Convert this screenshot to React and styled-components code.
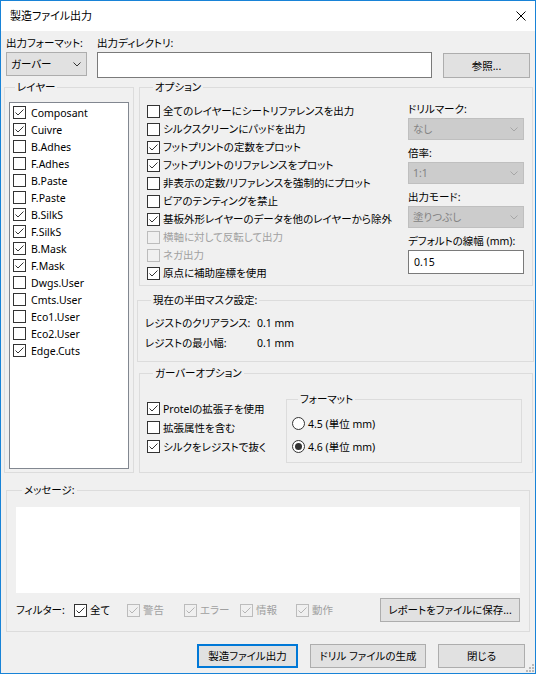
import React from "react";
import styled, { createGlobalStyle } from "styled-components";

const GlobalStyle = createGlobalStyle`
  html, body {
    margin: 0;
    padding: 0;
    background: #f0f0f0;
  }
  body {
    font-family: "Noto Sans", "Noto Sans CJK JP", sans-serif;
    font-size: 10.5px;
    line-height: 14px;
    color: #000;
    font-feature-settings: "palt";
  }
  * {
    box-sizing: border-box;
  }
`;

const Window = styled.div`
  position: relative;
  width: 536px;
  height: 674px;
  border: 1px solid #1883d7;
  background: #f0f0f0;
  display: flex;
  flex-direction: column;
`;

const TitleBar = styled.div`
  height: 30px;
  background: #fff;
  display: flex;
  align-items: center;
  justify-content: space-between;
  padding: 0 9px 0 9px;
  font-size: 11px;
`;

const Body = styled.div`
  flex: 1;
  padding: 5px 1px 0 3px;
  display: flex;
  flex-direction: column;
`;

const TopRow = styled.div`
  display: flex;
  align-items: flex-start;
  margin: 0 4px 0 2px;
`;

const Field = styled.div`
  display: flex;
  flex-direction: column;
  width: ${(p) => p.$w}px;
  margin-left: ${(p) => p.$ml || 0}px;
`;

const Label = styled.div`
  height: 14px;
  width: ${(p) => (p.$w ? `${p.$w}px` : "auto")};
  flex: none;
  margin-bottom: ${(p) => p.$mb || 0}px;
  margin-top: ${(p) => p.$mt || 0}px;
  color: ${(p) => (p.$disabled ? "#a0a0a0" : "#000")};
  white-space: nowrap;
`;

const SelectBox = styled.div`
  height: ${(p) => p.$h}px;
  display: flex;
  align-items: center;
  justify-content: space-between;
  padding: 0 5px 0 4px;
  border: 1px solid ${(p) => (p.$disabled ? "#bfbfbf" : "#adadad")};
  background: ${(p) => (p.$disabled ? "#cccccc" : "#e1e1e1")};
  color: ${(p) => (p.$disabled ? "#838383" : "#000")};
`;

const TextBox = styled.div`
  height: ${(p) => p.$h}px;
  border: 1px solid #7a7a7a;
  background: #fff;
  display: flex;
  align-items: center;
  padding-left: 5px;
`;

const Button = styled.div`
  width: ${(p) => p.$w}px;
  height: ${(p) => p.$h || 24}px;
  margin-top: ${(p) => p.$mt || 0}px;
  margin-left: ${(p) => p.$ml || "0px"};
  border: ${(p) => (p.$default ? "2px solid #0078d7" : "1px solid #adadad")};
  background: #e1e1e1;
  display: flex;
  align-items: center;
  justify-content: center;
  white-space: nowrap;
  flex: none;
`;

const Middle = styled.div`
  display: flex;
  margin-top: 2px;
  height: 393px;
`;

const RightColumn = styled.div`
  flex: 1;
  margin-left: 3px;
  display: flex;
  flex-direction: column;
`;

const Group = styled.fieldset`
  margin: ${(p) => p.$m || 0};
  padding: ${(p) => p.$pad || 0};
  border: 1px solid #dcdcdc;
  min-width: 0;
  width: ${(p) => (p.$w ? `${p.$w}px` : "auto")};
  height: ${(p) => p.$h}px;
  flex: none;
`;

const Legend = styled.legend`
  margin-left: 6px;
  padding: 0 2px;
  line-height: 14px;
  height: 14px;
`;

const LayerList = styled.div`
  height: 367px;
  border: 1px solid #828790;
  background: #fff;
  padding: 1px 0 0 3px;
`;

const Row = styled.label`
  display: flex;
  align-items: center;
  height: ${(p) => p.$h}px;
  gap: ${(p) => p.$gap || 3}px;
  color: ${(p) => (p.$disabled ? "#a0a0a0" : "#000")};
  white-space: nowrap;
  width: ${(p) => (p.$w ? `${p.$w}px` : "auto")};
  flex: none;
`;

const Box = styled.span`
  width: 13px;
  height: 13px;
  flex: none;
  border: 1px solid ${(p) => (p.$disabled ? "#bcbcbc" : "#333")};
  background: ${(p) => (p.$disabled ? "#f0f0f0" : "#fff")};
  display: flex;
  align-items: center;
  justify-content: center;
`;

const Radio = styled.span`
  width: 13px;
  height: 13px;
  flex: none;
  border: 1px solid #333;
  border-radius: 50%;
  background: #fff;
  display: flex;
  align-items: center;
  justify-content: center;
  &::after {
    content: "";
    width: 7px;
    height: 7px;
    border-radius: 50%;
    background: ${(p) => (p.$on ? "#333" : "transparent")};
  }
`;

const OptionsBody = styled.div`
  display: flex;
`;

const OptionChecks = styled.div`
  width: 261px;
  display: flex;
  flex-direction: column;
`;

const OptionSide = styled.div`
  width: 116px;
  display: flex;
  flex-direction: column;
`;

const MaskGrid = styled.div`
  display: grid;
  grid-template-columns: 112px auto;
  grid-auto-rows: 20px;
  align-items: center;
  white-space: nowrap;
`;

const GerberBody = styled.div`
  display: flex;
`;

const GerberChecks = styled.div`
  width: 139px;
  margin-top: 19px;
  display: flex;
  flex-direction: column;
`;

const MessageArea = styled.div`
  height: 86px;
  background: #fff;
`;

const FilterRow = styled.div`
  display: flex;
  align-items: center;
  height: 24px;
  margin-top: 5px;
`;

const BottomRow = styled.div`
  display: flex;
  justify-content: flex-end;
  gap: 12px;
  margin: 12px 9px 0 0;
`;

const Grip = styled.svg`
  position: absolute;
  right: 1px;
  bottom: 1px;
`;

function Chevron({ color }) {
  return (
    <svg width="8" height="5" viewBox="0 0 8 5">
      <path d="M0.5 0.5 L4 4 L7.5 0.5" fill="none" stroke={color} strokeWidth="1" />
    </svg>
  );
}

function Check({ checked, disabled }) {
  return (
    <Box $disabled={disabled}>
      {checked && (
        <svg width="11" height="11" viewBox="0 0 11 11">
          <path
            d="M1.5 5.5 L4 8 L9.5 2.5"
            fill="none"
            stroke={disabled ? "#b5b5b5" : "#333"}
            strokeWidth="1"
          />
        </svg>
      )}
    </Box>
  );
}

function CheckItem({ label, checked, disabled, h, w, gap }) {
  return (
    <Row $h={h} $w={w} $gap={gap} $disabled={disabled}>
      <Check checked={checked} disabled={disabled} />
      {label}
    </Row>
  );
}

const layers = [
  ["Composant", true],
  ["Cuivre", true],
  ["B.Adhes", false],
  ["F.Adhes", false],
  ["B.Paste", false],
  ["F.Paste", false],
  ["B.SilkS", true],
  ["F.SilkS", true],
  ["B.Mask", true],
  ["F.Mask", true],
  ["Dwgs.User", false],
  ["Cmts.User", false],
  ["Eco1.User", false],
  ["Eco2.User", false],
  ["Edge.Cuts", true],
];

const options = [
  ["全てのレイヤーにシートリファレンスを出力", false],
  ["シルクスクリーンにパッドを出力", false],
  ["フットプリントの定数をプロット", true],
  ["フットプリントのリファレンスをプロット", true],
  ["非表示の定数/リファレンスを強制的にプロット", false],
  ["ビアのテンティングを禁止", false],
  ["基板外形レイヤーのデータを他のレイヤーから除外", true],
  ["横軸に対して反転して出力", false, true],
  ["ネガ出力", false, true],
  ["原点に補助座標を使用", true],
];

const filters = [
  ["全て", true, false, 53],
  ["警告", true, true, 57],
  ["エラー", true, true, 56],
  ["情報", true, true, 56],
  ["動作", true, true, 56],
];

export default function App() {
  return (
    <>
      <GlobalStyle />
      <Window>
        <TitleBar>
          <span>製造ファイル出力</span>
          <svg width="10" height="10" viewBox="0 0 10 10">
            <path d="M0.5 0.5 L9.5 9.5 M9.5 0.5 L0.5 9.5" stroke="#000" strokeWidth="1" />
          </svg>
        </TitleBar>
        <Body>
          <TopRow>
            <Field $w={81}>
              <Label $mb={2}>出力フォーマット:</Label>
              <SelectBox $h={24}>
                ガーバー
                <Chevron color="#333" />
              </SelectBox>
            </Field>
            <Field $w={335} $ml={10}>
              <Label $mb={2}>出力ディレクトリ:</Label>
              <TextBox $h={26} />
            </Field>
            <Button $w={87} $h={25} $mt={17} $ml="11px">
              参照...
            </Button>
          </TopRow>

          <Middle>
            <Group $w={130} $h={393} $pad="8px 4px 0 4px">
              <Legend>レイヤー</Legend>
              <LayerList>
                {layers.map(([name, on]) => (
                  <CheckItem key={name} label={name} checked={on} h={17} gap={5} />
                ))}
              </LayerList>
            </Group>

            <RightColumn>
              <Group $h={206} $m="0 1px 0 2px" $pad="8px 7px 0 7px">
                <Legend>オプション</Legend>
                <OptionsBody>
                  <OptionChecks>
                    {options.map(([text, on, dis]) => (
                      <CheckItem key={text} label={text} checked={on} disabled={dis} h={18} />
                    ))}
                  </OptionChecks>
                  <OptionSide>
                    <Label $mb={2}>ドリルマーク:</Label>
                    <SelectBox $h={22} $disabled>
                      なし
                      <Chevron color="#a6a6a6" />
                    </SelectBox>
                    <Label $mt={6} $mb={2}>倍率:</Label>
                    <SelectBox $h={22} $disabled>
                      1:1
                      <Chevron color="#a6a6a6" />
                    </SelectBox>
                    <Label $mt={6} $mb={2}>出力モード:</Label>
                    <SelectBox $h={22} $disabled>
                      塗りつぶし
                      <Chevron color="#a6a6a6" />
                    </SelectBox>
                    <Label $mt={6} $mb={2}>デフォルトの線幅 (mm):</Label>
                    <TextBox $h={24}>0.15</TextBox>
                  </OptionSide>
                </OptionsBody>
              </Group>

              <Group $h={69} $m="7px 0 0 0" $pad="6px 7px 0 7px">
                <Legend>現在の半田マスク設定:</Legend>
                <MaskGrid>
                  <span>レジストのクリアランス:</span>
                  <span>0.1 mm</span>
                  <span>レジストの最小幅:</span>
                  <span>0.1 mm</span>
                </MaskGrid>
              </Group>

              <Group $h={107} $m="4px 1px 0 2px" $pad="0 7px 0 7px">
                <Legend>ガーバーオプション</Legend>
                <GerberBody>
                  <GerberChecks>
                    <CheckItem label="Protelの拡張子を使用" checked h={19} />
                    <CheckItem label="拡張属性を含む" h={19} />
                    <CheckItem label="シルクをレジストで抜く" checked h={19} />
                  </GerberChecks>
                  <Group $w={236} $h={71} $m="12px 0 0 0" $pad="6px 5px 0 5px">
                    <Legend>フォーマット</Legend>
                    <Row $h={23} $gap={3}>
                      <Radio />
                      4.5 (単位 mm)
                    </Row>
                    <Row $h={23} $gap={3}>
                      <Radio $on />
                      4.6 (単位 mm)
                    </Row>
                  </Group>
                </GerberBody>
              </Group>
            </RightColumn>
          </Middle>

          <Group $h={149} $m="10px 4px 0 2px" $pad="10px 9px 0 9px">
            <Legend>メッセージ:</Legend>
            <MessageArea />
            <FilterRow>
              <Label $w={58}>フィルター:</Label>
              {filters.map(([text, on, dis, w]) => (
                <CheckItem key={text} label={text} checked={on} disabled={dis} h={24} w={w} gap={3} />
              ))}
              <Button $w={140} $ml="auto">
                レポートをファイルに保存...
              </Button>
            </FilterRow>
          </Group>

          <BottomRow>
            <Button $w={101} $default>
              製造ファイル出力
            </Button>
            <Button $w={116}>ドリル ファイルの生成</Button>
            <Button $w={87}>閉じる</Button>
          </BottomRow>
        </Body>
        <Grip width="10" height="10" viewBox="0 0 10 10">
          {[
            [8, 0],
            [8, 3],
            [5, 3],
            [8, 6],
            [5, 6],
            [2, 6],
          ].map(([x, y]) => (
            <rect key={`${x}-${y}`} x={x} y={y + 2} width="2" height="2" fill="#b8b8b8" />
          ))}
        </Grip>
      </Window>
    </>
  );
}
